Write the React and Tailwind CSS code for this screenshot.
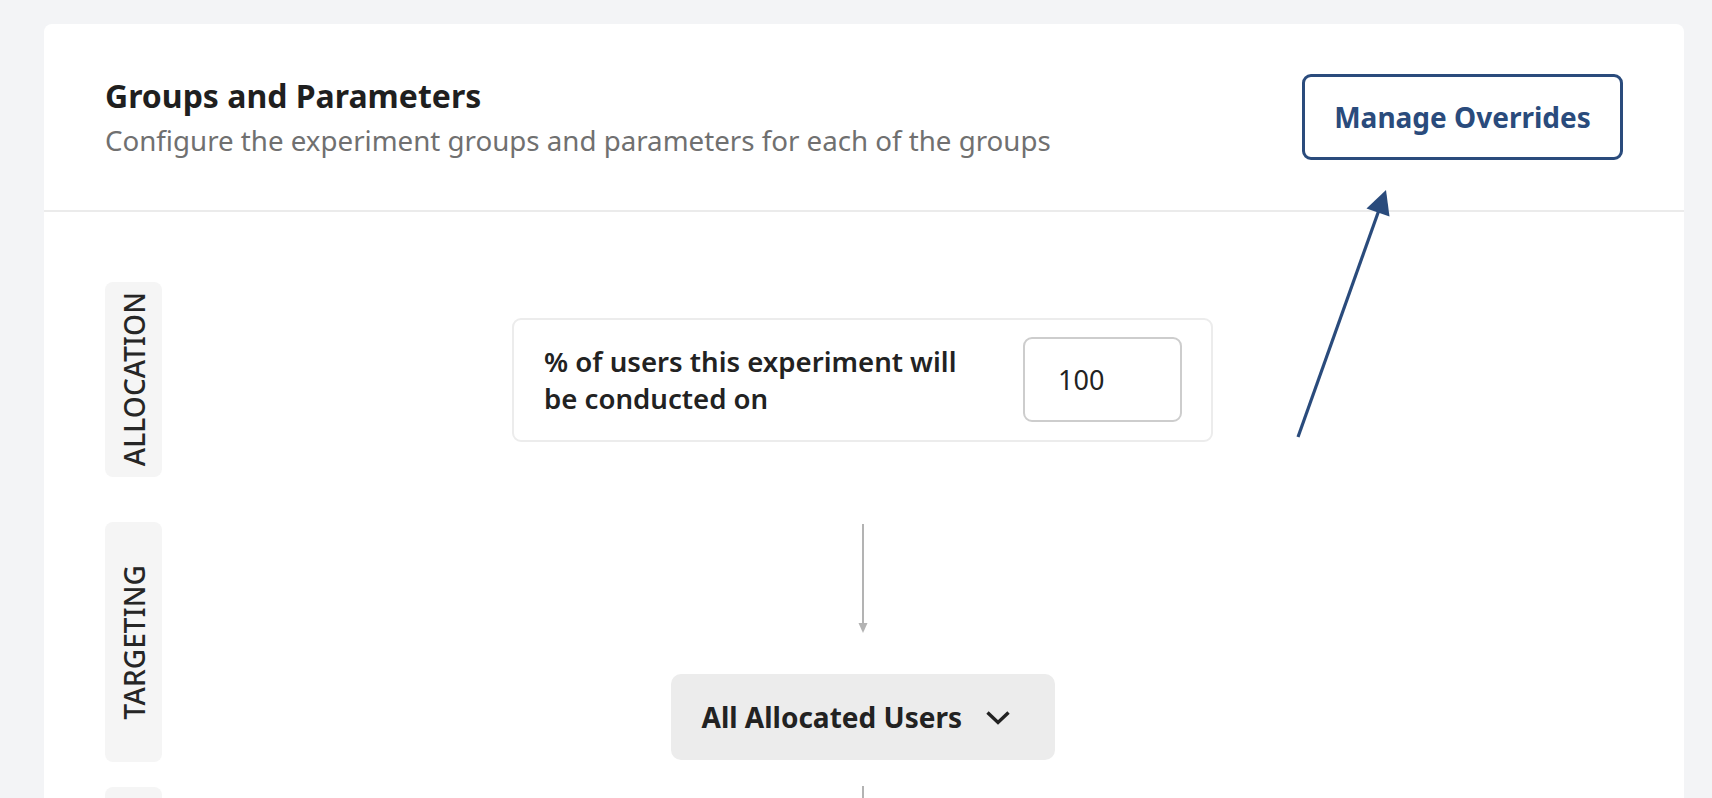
import React from "react";

function Pill({ label, h }) {
  return (
    <div
      className={`w-[57px] ${h} bg-[#f5f5f5] rounded-[8px] flex items-center justify-center`}
    >
      <span className="[writing-mode:vertical-rl] rotate-180 text-[28px] leading-none font-medium text-[#262626] tracking-[0.1px]">
        {label}
      </span>
    </div>
  );
}

export default function App() {
  return (
    <div className="relative h-[798px] overflow-hidden bg-[#f3f4f6] pt-[24px] pl-[44px] pr-[28px] font-['Noto_Sans',sans-serif]">
      <div className="bg-white rounded-[8px] min-h-[900px]">
        {/* Header */}
        <div className="h-[188px] flex items-center justify-between px-[61px] border-b-[2px] border-[#ebebeb]">
          <div>
            <h2 className="text-[32px] leading-[40px] font-bold text-[#1f1f1f]">
              Groups and Parameters
            </h2>
            <p className="mt-[6px] text-[27.7px] leading-[37px] text-[#707070]">
              Configure the experiment groups and parameters for each of the groups
            </p>
          </div>
          <button className="w-[321px] h-[86px] border-[3px] border-[#2a4b7c] rounded-[9px] text-[#2a4b7c] font-bold text-[28px] leading-none bg-white">
            Manage Overrides
          </button>
        </div>

        {/* Body */}
        <div className="px-[61px] pt-[70px] flex flex-col">
          {/* Allocation row */}
          <div className="grid grid-cols-[57px_1fr_60px]">
            <Pill label="ALLOCATION" h="h-[195px]" />
            <div className="flex items-center justify-center">
              <div className="w-[701px] h-[124px] border-2 border-[#ececec] rounded-[9px] flex items-center justify-between pl-[30px] pr-[29px]">
                <span className="w-[432px] text-[27.6px] leading-[37px] font-semibold text-[#222]">
                  % of users this experiment will be conducted on
                </span>
                <input
                  readOnly
                  defaultValue="100"
                  className="w-[159px] h-[85px] border-2 border-[#cdcdcd] rounded-[9px] pl-[33px] text-[27px] text-[#222] outline-none bg-white"
                />
              </div>
            </div>
            <div />
          </div>

          {/* Targeting row */}
          <div className="grid grid-cols-[57px_1fr_60px] mt-[45px]">
            <Pill label="TARGETING" h="h-[240px]" />
            <div className="flex flex-col items-center justify-center">
              <svg width="12" height="109" viewBox="0 0 12 109" className="block">
                <line x1="6" y1="0" x2="6" y2="100" stroke="#b3b3b3" strokeWidth="2" />
                <polygon points="1.5,99 10.5,99 6,109" fill="#b3b3b3" />
              </svg>
              <button className="mt-[41px] h-[86px] w-[384px] bg-[#ececec] rounded-[10px] flex items-center pl-[31px] pr-[40px] gap-[20px]">
                <span className="text-[28px] leading-none font-bold text-[#222]">
                  All Allocated Users
                </span>
                <span className="w-[32px] flex justify-center">
                  <svg width="26" height="17" viewBox="0 0 26 17">
                    <polyline
                      points="2.5,3.5 13,13.5 23.5,3.5"
                      fill="none"
                      stroke="#222"
                      strokeWidth="3.4"
                    />
                  </svg>
                </span>
              </button>
            </div>
            <div />
          </div>

          {/* Next row */}
          <div className="grid grid-cols-[57px_1fr_60px] mt-[25px]">
            <div className="w-[57px] h-[200px] bg-[#f5f5f5] rounded-[8px]" />
            <div className="flex flex-col items-center -mt-[1px]">
              <div className="w-[2px] h-[60px] bg-[#b3b3b3]" />
            </div>
            <div />
          </div>
        </div>
      </div>

      {/* Annotation arrow */}
      <svg
        className="absolute left-0 top-0 pointer-events-none"
        width="1712"
        height="798"
        viewBox="0 0 1712 798"
      >
        <line x1="1298" y1="437" x2="1379" y2="210" stroke="#2a4b7c" strokeWidth="3.2" />
        <polygon points="1386,190 1366.5,208.5 1389.5,216.5" fill="#2a4b7c" />
      </svg>
    </div>
  );
}
